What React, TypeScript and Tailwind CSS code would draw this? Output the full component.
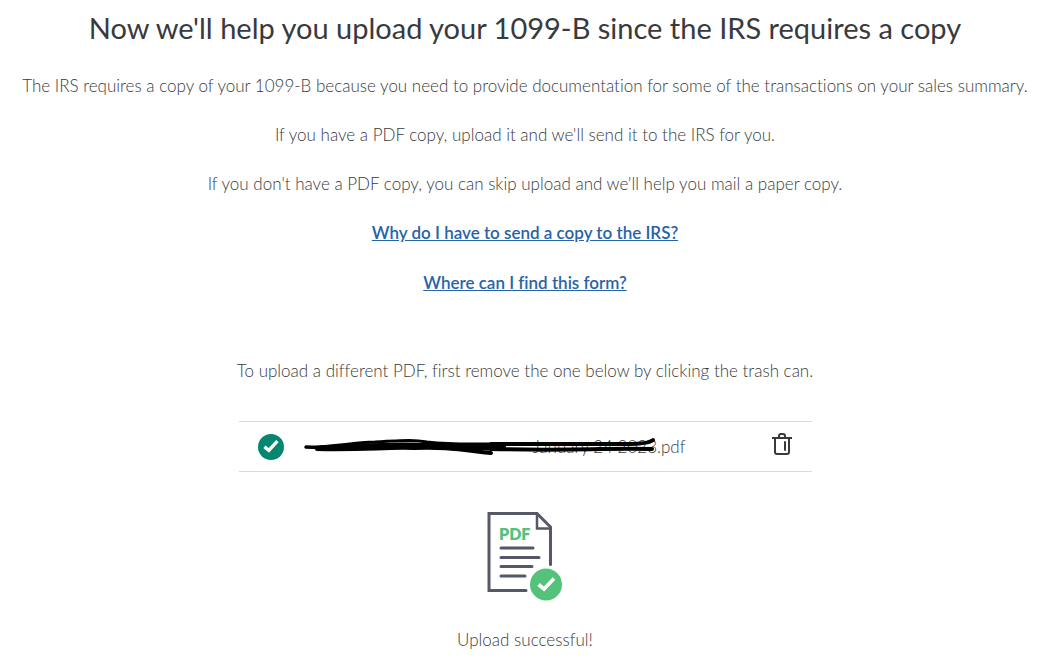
import React from "react";

function FileCheck() {
  return (
    <svg viewBox="0 0 26 26" className="size-[26px] shrink-0" role="img" aria-label="Uploaded">
      <circle cx="13" cy="13" r="13" fill="#058670" />
      <path d="m6.400 12.800 4.400 3.600 8.600-9.200" fill="none" stroke="#fff" strokeWidth="3.300" />
    </svg>
  );
}

function Trash() {
  return (
    <svg viewBox="0 0 20 23" className="h-[23px] w-5" fill="none" stroke="#393a3d" strokeWidth="2" aria-hidden="true">
      <path d="M0 5h20" />
      <path d="M3 5v14q0 2 2 2h10q2 0 2-2V5" />
      <path d="M7 5V3q0-2 2-2h2q2 0 2 2v2" />
      <path d="M13 9v8" strokeLinecap="round" />
    </svg>
  );
}

function PdfDocument() {
  return (
    <svg viewBox="0 0 76 89" className="h-[89px] w-[76px]" role="img" aria-label="PDF document uploaded">
      <g fill="none" stroke="#545868" strokeWidth="3" strokeLinecap="round">
        <path d="M39 78.500H2V1.500H50L63.500 15V52.500" />
        <path d="M50 2V16.500H63" strokeWidth="2.500" />
        <path d="M14 36h32M14 45.500h38M14 54.500h31M14 64h24" />
      </g>
      <text x="12" y="27.500" fill="#53c27b" fontSize="16" className="font-['Lato',sans-serif] font-extrabold">
        PDF
      </text>
      <circle cx="59" cy="72.500" r="16" fill="#53c27b" />
      <path d="m51.500 72.500 5.500 4.500 10-10.500" fill="none" stroke="#fff" strokeWidth="3.600" />
    </svg>
  );
}

function Redaction() {
  return (
    <svg viewBox="0 0 353 20" className="absolute -left-px top-1/2 h-5 w-[353px] -translate-y-1/2" fill="none" stroke="#000" strokeLinecap="round" strokeLinejoin="round" aria-hidden="true">
      <g strokeWidth="3">
        <path d="M3 10C35 10 44 6 72 5C105 3 113 3 124 5C150 8 170 7 190 7" />
        <path d="M3 10C52 14 86 6 130 8C160 12 175 12 190 12" />
        <path d="M14 12C65 13 81 10 111 11C141 10 152 12 188 16" strokeWidth="4" />
        <path d="M18 11C90 7 115 7 188 11" strokeWidth="5" />
        <path d="M150 9H200" strokeWidth="6" />
      </g>
      <path d="M188 7H325Q345 7 350 3M188 12C275 14 290 11 349 12" strokeWidth="4" />
    </svg>
  );
}

export default function App() {
  return (
    <main className="flex w-full flex-col items-center bg-white pt-[10px] pr-2 pl-4 text-center font-['Lato',sans-serif] text-[17px] leading-6 font-light text-[#393a3d] [font-variant-ligatures:none]">
      <h1 className="mb-7 text-[29px] leading-9 font-normal text-[#393a3d]">
        Now we'll help you upload your 1099-B since the IRS requires a copy
      </h1>
      <div className="flex flex-col items-center gap-[25px]">
        <p>
          The IRS requires a copy of your 1099-B because you need to provide documentation for some of the transactions on your sales summary.
        </p>
        <p>If you have a PDF copy, upload it and we'll send it to the IRS for you.</p>
        <p>If you don't have a PDF copy, you can skip upload and we'll help you mail a paper copy.</p>
        <div className="flex flex-col items-center gap-[26px]">
          <a href="#why" className="font-semibold text-[#2863a8] underline">Why do I have to send a copy to the IRS?</a>
          <a href="#where" className="font-semibold text-[#2863a8] underline">Where can I find this form?</a>
        </div>
      </div>
      <section className="mt-16 flex w-full flex-col items-center">
        <p>To upload a different PDF, first remove the one below by clicking the trash can.</p>
        <div className="mt-[38px] flex h-[51px] w-full max-w-[573px] items-center border-y border-[#d9dade] pr-5 pl-[19px]">
          <FileCheck />
          <div className="relative ml-5 w-[382px] text-right">
            <span>January 24 2023.pdf</span>
            <Redaction />
          </div>
          <button type="button" aria-label="Remove PDF" className="mb-1 ml-auto cursor-pointer">
            <Trash />
          </button>
        </div>
        <div className="mt-10">
          <PdfDocument />
        </div>
        <p role="status" className="mt-[27px]">Upload successful!</p>
      </section>
    </main>
  );
}
